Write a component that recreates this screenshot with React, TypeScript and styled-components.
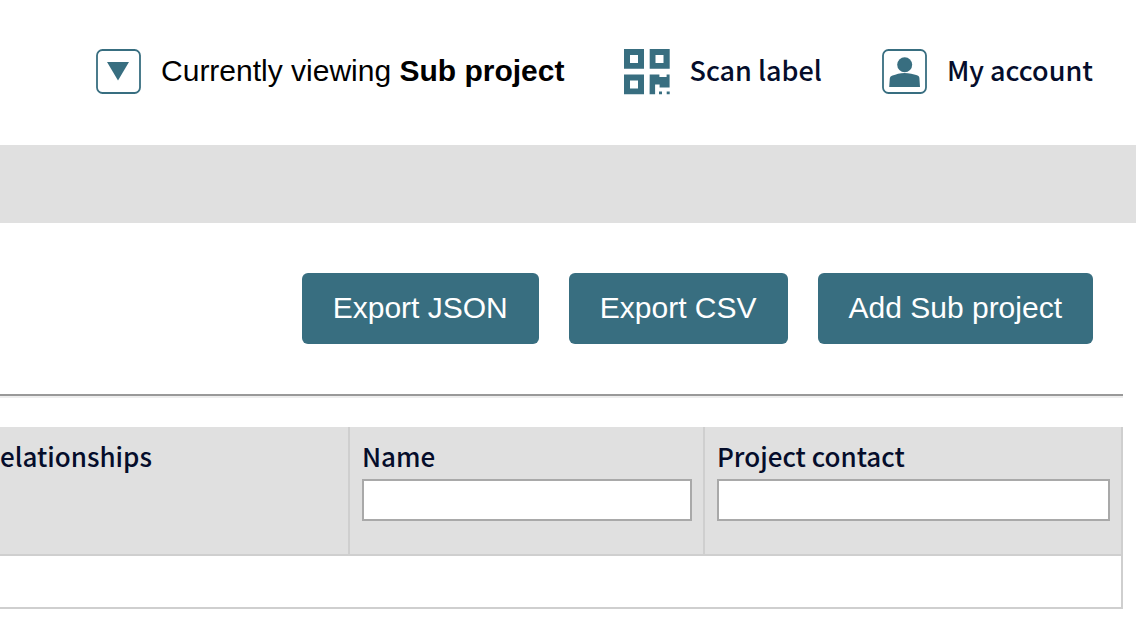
import React from 'react';
import styled, { createGlobalStyle } from 'styled-components';

const teal = '#386e80';
const navy = '#050d2b';
const grey = '#e0e0e0';
const line = '#cfcfcf';
const sourceSans = "'Source Sans Pro', 'Noto Sans CJK JP', sans-serif";

const GlobalStyle = createGlobalStyle`
  *, *::before, *::after { box-sizing: border-box; }
  body {
    margin: 0;
    background: #fff;
    color: #000;
    font-family: 'Liberation Sans', Arial, sans-serif;
    font-size: 30px;
    overflow-x: hidden;
  }
`;

const Header = styled.header`
  display: flex;
  justify-content: flex-end;
  align-items: center;
  gap: 60px;
  height: 145px;
  padding: 0 43px 2px 0;
  white-space: nowrap;
`;

const HeaderItem = styled.div`
  display: flex;
  align-items: center;
  gap: 19px;
  line-height: 36px;
`;

const ToggleButton = styled.button`
  display: block;
  padding: 0;
  border: 0;
  background: none;
  cursor: pointer;
`;

const HeaderLink = styled.a`
  display: flex;
  align-items: center;
  gap: 19px;
  color: ${navy};
  font-family: ${sourceSans};
  font-size: 27px;
  font-weight: 500;
  line-height: 36px;
  text-decoration: none;
`;

const ViewText = styled.span`
  padding-bottom: 2px;
`;

const LinkText = styled.span`
  padding-bottom: 4px;
`;

const Icon = styled.svg`
  display: block;
  flex: none;
  width: 46px;
  height: 46px;
`;

const Band = styled.div`
  height: 78px;
  background: ${grey};
`;

const Actions = styled.div`
  display: flex;
  justify-content: flex-end;
  gap: 30px;
  padding: 50px 43px 50px 0;
`;

const ActionButton = styled.button`
  padding: 17px 31px 18px;
  border: 0;
  border-radius: 6px;
  background: ${teal};
  color: #fff;
  font: inherit;
  line-height: 36px;
  cursor: pointer;
`;

const Divider = styled.hr`
  margin: 0 13px 29px 0;
  border: 0;
  border-top: 2px solid #999;
  border-bottom: 2px solid #eee;
`;

const TableWrap = styled.div`
  padding-right: 13px;
`;

const Table = styled.table`
  width: 100%;
  table-layout: fixed;
  border-collapse: separate;
  border-spacing: 0;
`;

const HeadCell = styled.th<{ $width?: number; $flush?: boolean }>`
  width: ${({ $width }) => ($width ? `${$width}px` : 'auto')};
  height: 129px;
  padding: ${({ $flush }) => ($flush ? '12px 11px 0 0' : '12px 11px 0 12px')};
  border-right: 2px solid ${line};
  border-bottom: 2px solid ${line};
  background: ${grey};
  color: ${navy};
  font-family: ${sourceSans};
  font-size: 26px;
  font-weight: 500;
  line-height: 34px;
  text-align: left;
  vertical-align: top;
`;

const Label = styled.label`
  display: block;
`;

const Filter = styled.input`
  display: block;
  width: 100%;
  height: 42px;
  margin-top: 6px;
  padding: 2px 6px;
  border: 2px solid #a9a9a9;
  border-radius: 0;
  background: #fff;
  font-size: 26px;
`;

const EmptyCell = styled.td`
  height: 53px;
  padding: 0;
  border-right: 2px solid ${line};
  border-bottom: 2px solid ${line};
`;

const ChevronIcon = () => (
  <Icon viewBox="0 0 46 46" aria-hidden="true">
    <rect x="1" y="1" width="43" height="43" rx="5.5" fill="#fff" stroke={teal} strokeWidth="1.8" />
    <path d="M11 13h22L22 31.5z" fill={teal} />
  </Icon>
);

const QrIcon = () => (
  <Icon viewBox="0 0 46 46" aria-hidden="true">
    <g fill={teal} fillRule="evenodd">
      <path d="M0 0h20v19.7H0zM6 6v8h8V6z" />
      <path d="M25.7 0h20v19.7h-20zM31.5 6v8h8V6z" />
      <path d="M0 25.5h20v19.7H0zM6 31.5v8h8v-8z" />
      <path d="M25.7 25.5h9.7v2.5h7.2v-2.5h3v13h-10v-3h-4.5v9.7h-5.5z" />
      <path d="M35 42.5h3v2.7h-3zM42.7 42.5h3v2.7h-3z" />
    </g>
  </Icon>
);

const UserIcon = () => (
  <Icon viewBox="0 0 46 46" aria-hidden="true">
    <rect x="1" y="1" width="43" height="43" rx="5.5" fill="#fff" stroke={teal} strokeWidth="1.8" />
    <circle cx="22.7" cy="15.8" r="7.5" fill={teal} />
    <path d="M7.2 38L7.8 29.5C8 28 9 27.2 10.5 26.6 14 25.3 18 24 22.5 24S31.500 25.3 35 26.3C36.5 26.8 37.3 27.5 37.4 29L38 38z" fill={teal} />
  </Icon>
);

export default function App() {
  return (
    <>
      <GlobalStyle />
      <Header>
        <HeaderItem>
          <ToggleButton type="button" aria-label="Change view">
            <ChevronIcon />
          </ToggleButton>
          <ViewText>
            Currently viewing <strong>Sub project</strong>
          </ViewText>
        </HeaderItem>
        <HeaderLink href="#scan">
          <QrIcon />
          <LinkText>Scan label</LinkText>
        </HeaderLink>
        <HeaderLink href="#account">
          <UserIcon />
          <LinkText>My account</LinkText>
        </HeaderLink>
      </Header>
      <Band />
      <main>
        <Actions>
          <ActionButton type="button">Export JSON</ActionButton>
          <ActionButton type="button">Export CSV</ActionButton>
          <ActionButton type="button">Add Sub project</ActionButton>
        </Actions>
        <Divider />
        <TableWrap>
          <Table>
            <thead>
              <tr>
                <HeadCell $flush>elationships</HeadCell>
                <HeadCell $width={355}>
                  <Label htmlFor="filter-name">Name</Label>
                  <Filter id="filter-name" type="text" />
                </HeadCell>
                <HeadCell $width={418}>
                  <Label htmlFor="filter-contact">Project contact</Label>
                  <Filter id="filter-contact" type="text" />
                </HeadCell>
              </tr>
            </thead>
            <tbody>
              <tr>
                <EmptyCell colSpan={3} />
              </tr>
            </tbody>
          </Table>
        </TableWrap>
      </main>
    </>
  );
}
